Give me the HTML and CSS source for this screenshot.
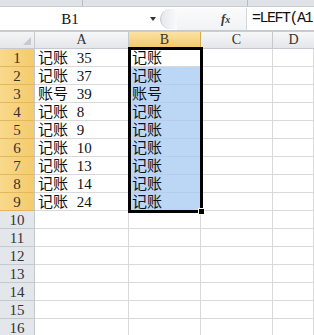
FILE: index.html
```html
<!DOCTYPE html>
<html lang="zh-CN">
<head>
<meta charset="UTF-8">
<title>Sheet1</title>
<link rel="stylesheet" href="styles.css">
</head>
<body>
<div class="ribbon"><span class="sep s1"></span><span class="sep s2"></span></div>
<div class="fbar">
    <div class="namebox">B1<span class="arrow"></span></div>
    <div class="grip"></div>
    <div class="fx"><i>f</i><i class="x">x</i></div>
    <div class="formula">=LEFT(A1</div>
</div>
<div class="sheet">
    <div class="corner"></div>
    <div class="colhdr">A</div>
    <div class="colhdr on">B</div>
    <div class="colhdr">C</div>
    <div class="colhdr last">D</div>

    <div class="rowhdr on">1</div><div class="cell">记账 35</div><div class="cell">记账</div><div class="cell"></div><div class="cell"></div>
    <div class="rowhdr on">2</div><div class="cell">记账 37</div><div class="cell sel">记账</div><div class="cell"></div><div class="cell"></div>
    <div class="rowhdr on">3</div><div class="cell">账号 39</div><div class="cell sel">账号</div><div class="cell"></div><div class="cell"></div>
    <div class="rowhdr on">4</div><div class="cell">记账 8</div><div class="cell sel">记账</div><div class="cell"></div><div class="cell"></div>
    <div class="rowhdr on">5</div><div class="cell">记账 9</div><div class="cell sel">记账</div><div class="cell"></div><div class="cell"></div>
    <div class="rowhdr on">6</div><div class="cell">记账 10</div><div class="cell sel">记账</div><div class="cell"></div><div class="cell"></div>
    <div class="rowhdr on">7</div><div class="cell">记账 13</div><div class="cell sel">记账</div><div class="cell"></div><div class="cell"></div>
    <div class="rowhdr on">8</div><div class="cell">记账 14</div><div class="cell sel">记账</div><div class="cell"></div><div class="cell"></div>
    <div class="rowhdr on">9</div><div class="cell">记账 24</div><div class="cell sel">记账</div><div class="cell"></div><div class="cell"></div>
    <div class="rowhdr">10</div><div class="cell"></div><div class="cell"></div><div class="cell"></div><div class="cell"></div>
    <div class="rowhdr">11</div><div class="cell"></div><div class="cell"></div><div class="cell"></div><div class="cell"></div>
    <div class="rowhdr">12</div><div class="cell"></div><div class="cell"></div><div class="cell"></div><div class="cell"></div>
    <div class="rowhdr">13</div><div class="cell"></div><div class="cell"></div><div class="cell"></div><div class="cell"></div>
    <div class="rowhdr">14</div><div class="cell"></div><div class="cell"></div><div class="cell"></div><div class="cell"></div>
    <div class="rowhdr">15</div><div class="cell"></div><div class="cell"></div><div class="cell"></div><div class="cell"></div>
    <div class="rowhdr">16</div><div class="cell"></div><div class="cell"></div><div class="cell"></div><div class="cell"></div>

    <div class="selection"></div>
    <div class="handle"></div>
</div>
</body>
</html>
```

FILE: styles.css
```css
body {
    margin: 0;
    width: 314px;
    height: 335px;
    overflow: hidden;
    background: #fff;
    font-family: "Liberation Serif", "Noto Sans CJK SC", serif;
    color: #111;
}
.ribbon {
    position: relative;
    height: 6px;
    background: #dfe2e6;
    border-bottom: 1px solid #c9ccd1;
}
.sep {
    position: absolute;
    top: 0;
    width: 1px;
    height: 6px;
    background: #b8bcc2;
}
.s1 { left: 82px; }
.s2 { left: 247px; }
.fbar {
    display: flex;
    height: 23px;
    background: #fff;
    border-bottom: 1px solid #c6c9ce;
    box-sizing: border-box;
    margin-top: 1px;
}
.namebox {
    position: relative;
    width: 160px;
    text-align: center;
    font-size: 15px;
    line-height: 22px;
    padding-right: 20px;
    box-sizing: border-box;
}
.arrow {
    position: absolute;
    left: 150px;
    top: 9px;
    border-left: 3px solid transparent;
    border-right: 3px solid transparent;
    border-top: 4px solid #333;
}
.grip {
    width: 16px;
    height: 20px;
    margin-top: 1px;
    border-radius: 10px 0 0 10px;
    background: linear-gradient(to right, #e6e8eb, #fafafa);
    border-left: 1px solid #c3c6ca;
}
.fx {
    width: 70px;
    padding-left: 44px;
    box-sizing: border-box;
    font-family: "Liberation Serif", serif;
    font-weight: bold;
    font-size: 13px;
    line-height: 22px;
    color: #3a3a3a;
    border-right: 1px solid #d2d5d9;
    background: linear-gradient(to bottom, #fbfbfc, #f2f3f5);
}
.fx .x {
    font-size: 10px;
}
.formula {
    flex: 1;
    padding-left: 5px;
    font-size: 15px;
    line-height: 22px;
    white-space: nowrap;
    font-family: "Liberation Mono", monospace;
    letter-spacing: -1.5px;
}
.sheet {
    position: relative;
    display: grid;
    grid-template-columns: 35px 94px 72px 72px 41px;
    grid-template-rows: 17px;
    grid-auto-rows: 18px;
    border-top: 1px solid #c9ccd1;
}
.corner, .colhdr, .rowhdr {
    box-sizing: border-box;
    border-right: 1px solid #c5c8cd;
    border-bottom: 1px solid #c5c8cd;
    font-size: 14px;
    color: #333;
    text-align: center;
}
.corner {
    position: relative;
    background: linear-gradient(to bottom, #f4f5f6, #e4e6e9);
}
.corner::after {
    content: "";
    position: absolute;
    right: 3px;
    bottom: 3px;
    border-left: 8px solid transparent;
    border-bottom: 8px solid #c6c9cd;
}
.colhdr {
    line-height: 16px;
    background: linear-gradient(to bottom, #f6f7f8, #e4e6e9);
}
.colhdr.last {
    border-right: none;
}
.colhdr.on {
    background: linear-gradient(to bottom, #fbe2a4, #f2c866);
    border-color: #d9ab4c;
}
.rowhdr {
    line-height: 18px;
    font-size: 15px;
    background: #e3e7ec;
}
.rowhdr.on {
    background: linear-gradient(to right, #f9d98c, #f4cb6c);
    border-bottom-color: #e2b85a;
}
.cell {
    box-sizing: border-box;
    border-right: 1px solid #d9d9d9;
    border-bottom: 1px solid #d9d9d9;
    font-size: 15px;
    line-height: 18px;
    padding-left: 3px;
    white-space: pre;
    word-spacing: 5px;
    overflow: hidden;
}
.cell.sel {
    background: #bcd6f5;
    border-bottom-color: #b3cdea;
}
.selection {
    position: absolute;
    left: 128px;
    top: 15px;
    width: 75px;
    height: 166px;
    box-sizing: border-box;
    border: 3px solid #000;
    pointer-events: none;
}
.handle {
    position: absolute;
    left: 198px;
    top: 176px;
    width: 5px;
    height: 5px;
    background: #000;
    border: 1px solid #fff;
}
```
